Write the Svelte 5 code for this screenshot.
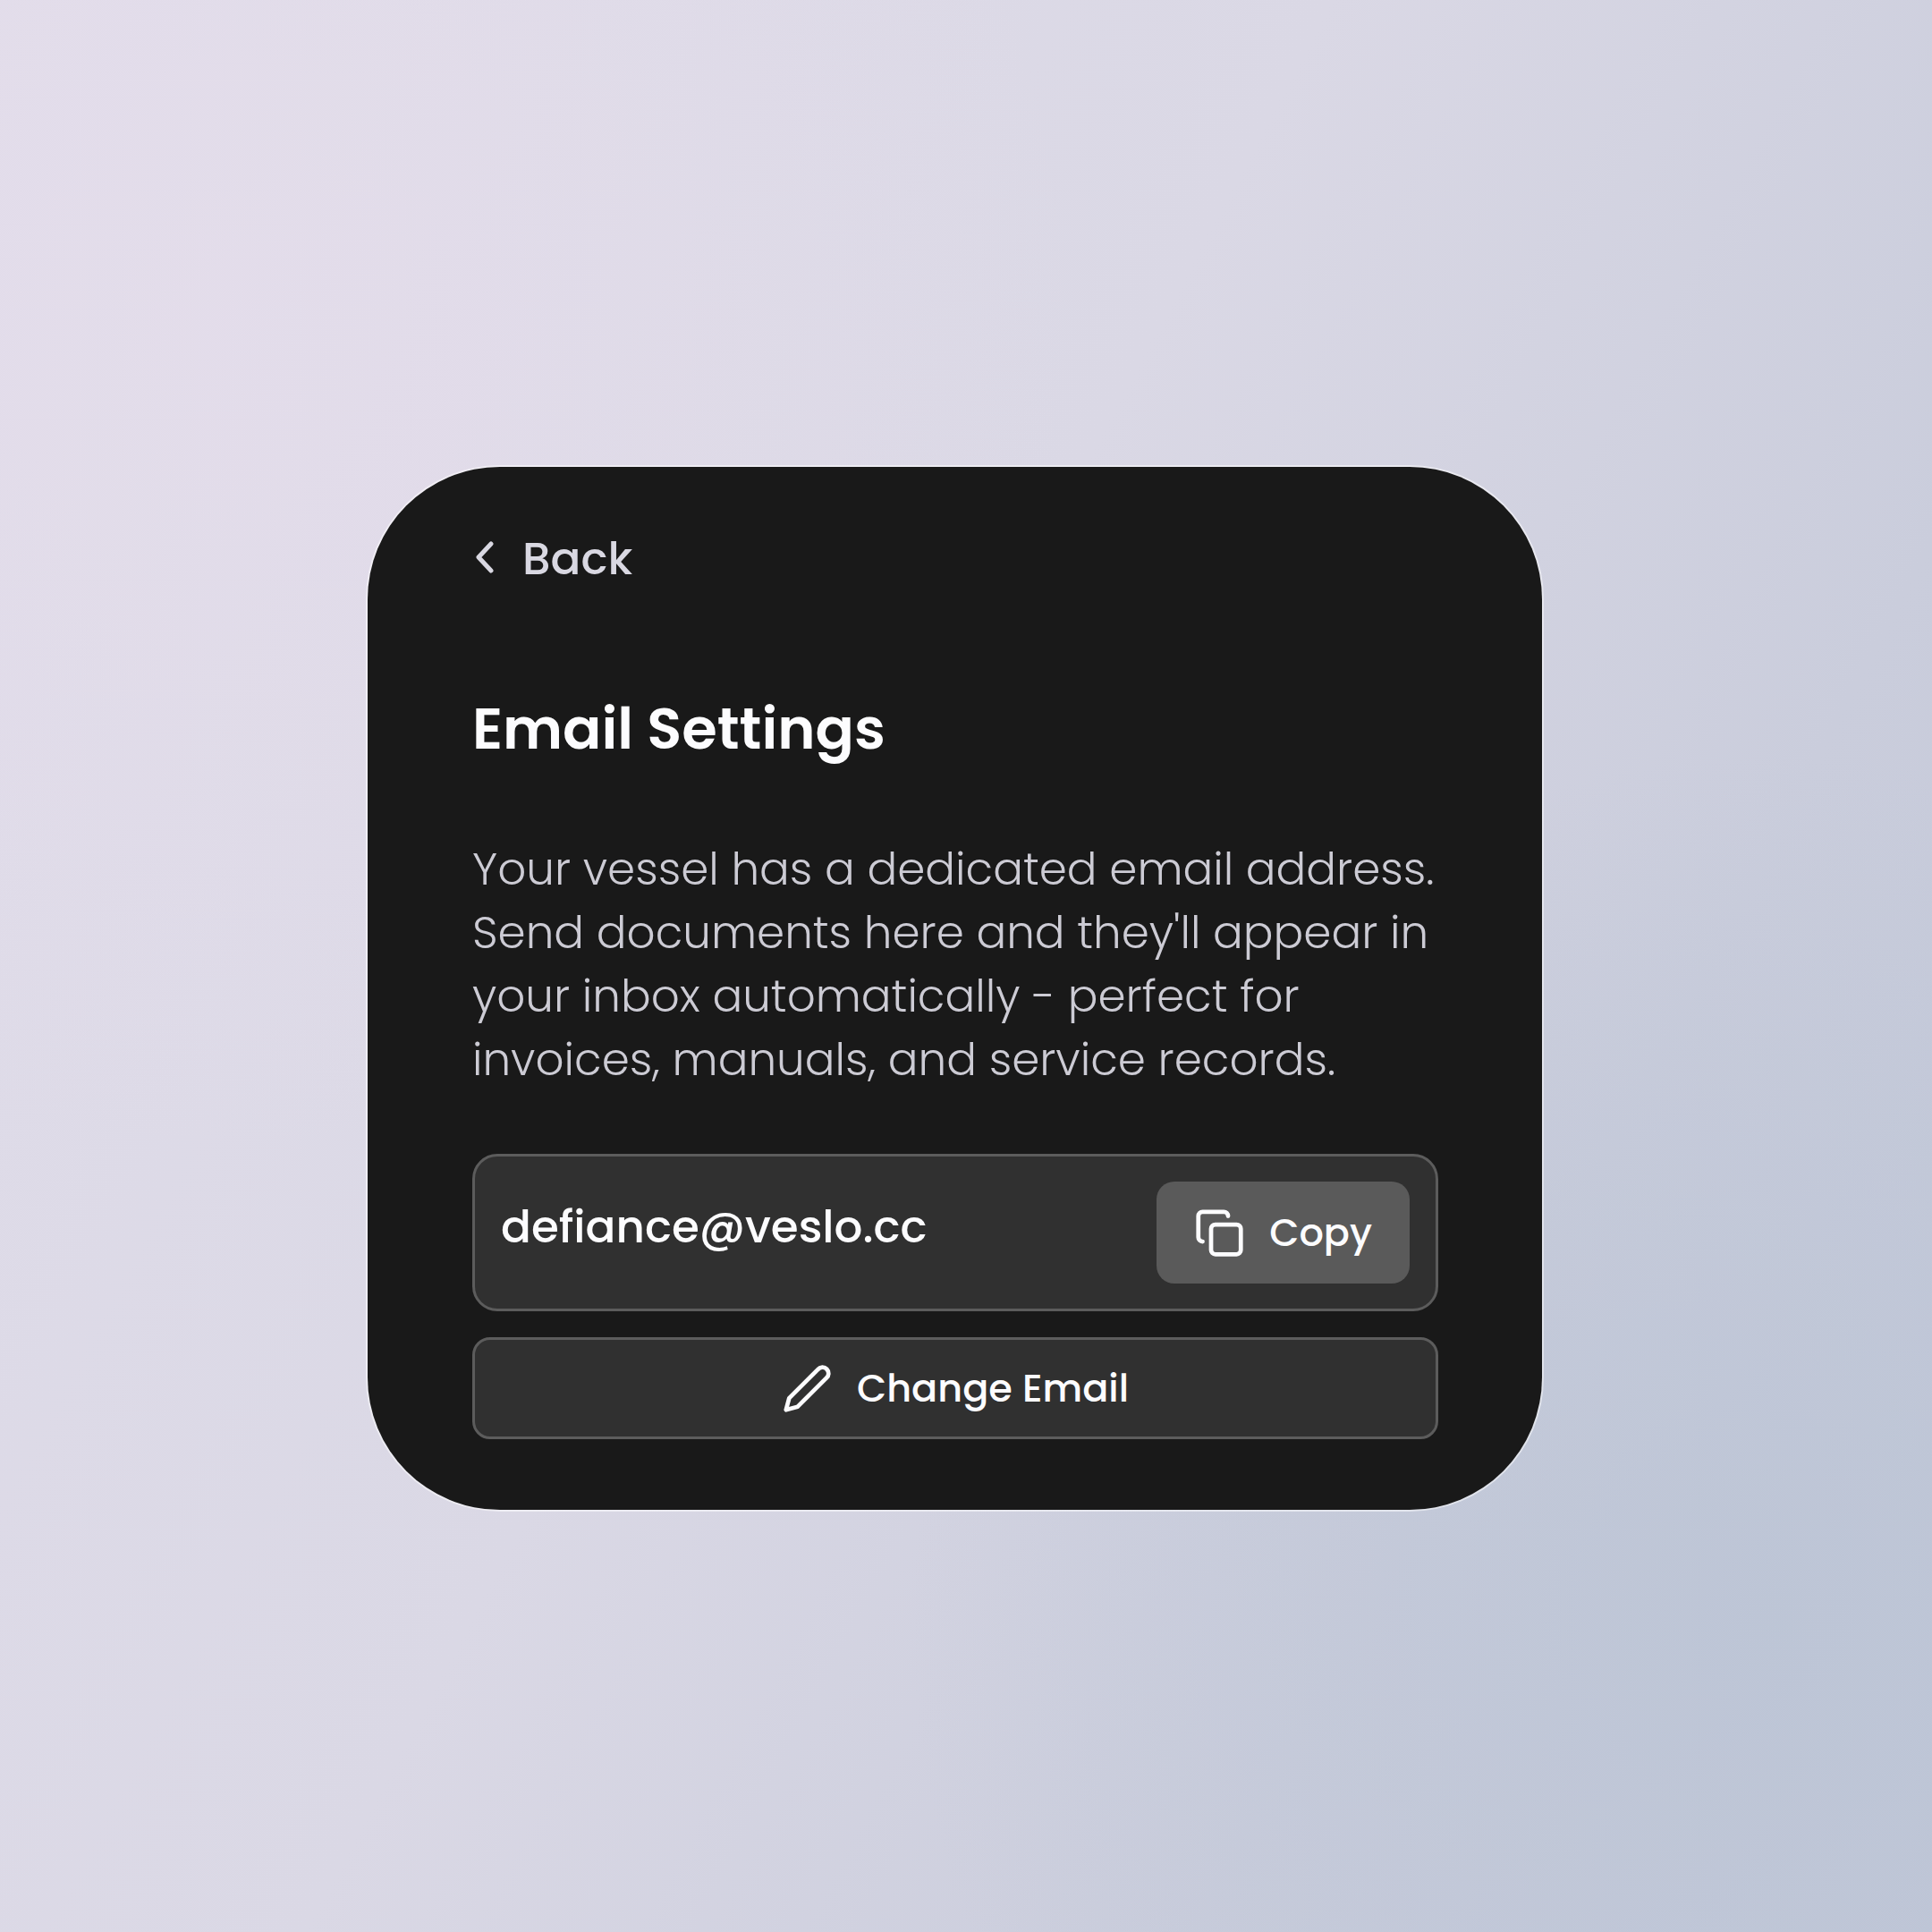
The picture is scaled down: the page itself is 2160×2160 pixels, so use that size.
<script>
  let email = $state('defiance@veslo.cc');
  let copied = $state(false);

  function handleCopy() {
    navigator.clipboard.writeText(email).then(() => {
      copied = true;
      setTimeout(() => {
        copied = false;
      }, 3000);
    });
  }
</script>

<main class="page">
  <section class="card" aria-labelledby="settings-title">
    <button class="back" type="button">
      <svg class="back-icon" viewBox="0 0 20 36" fill="none" aria-hidden="true">
        <path d="M17 3 3 18l14 15" />
      </svg>
      Back
    </button>

    <h1 class="title" id="settings-title">Email Settings</h1>

    <p class="description">
      Your vessel has a dedicated email address. Send documents here and they'll appear in your
      inbox automatically - perfect for invoices, manuals, and service records.
    </p>

    <div class="actions">
      <div class="address">
        <span class="address-text">{email}</span>
        <button class="button button--copy" type="button" onclick={handleCopy}>
          <svg class="icon" viewBox="0 0 24 24" aria-hidden="true">
            <rect width="14" height="14" x="8" y="8" rx="2" />
            <path d="M4 16c-1.1 0-2-.9-2-2V4c0-1.1.9-2 2-2h10c1.1 0 2 .9 2 2" />
          </svg>
          {copied ? 'Copied!' : 'Copy'}
        </button>
      </div>

      <button class="button button--change" type="button">
        <svg class="icon" viewBox="0 0 24 24" aria-hidden="true">
          <path d="M17 3a2.85 2.83 0 1 1 4 4L7.5 20.5 2 22l1.5-5.5Z" />
        </svg>
        Change Email
      </button>
    </div>
  </section>
</main>

<style>
  :global(body) {
    margin: 0;
  }

  .page {
    box-sizing: border-box;
    min-height: 100vh;
    display: flex;
    align-items: center;
    justify-content: center;
    padding: 50px 25px 0 0;
    background:
      radial-gradient(circle at 12% 16%, rgba(229, 221, 235, 0.7), transparent 36%),
      radial-gradient(circle at 92% 84%, rgba(187, 196, 213, 0.8), transparent 36%),
      linear-gradient(118deg, #e1ddea 0%, #dad8e5 45%, #cacddc 75%, #c1c7d8 100%);
    font-family: Poppins, Inter, 'Noto Sans', sans-serif;
  }

  .card {
    box-sizing: border-box;
    width: 100%;
    max-width: 1313px;
    display: flex;
    flex-direction: column;
    align-items: flex-start;
    padding: 67px 116px 79px 117px;
    border-radius: 148px;
    background: #191919;
    box-shadow: 0 0 0 2px rgba(255, 255, 255, 0.5);
  }

  button {
    border: 0;
    font: inherit;
    cursor: pointer;
  }

  .back {
    display: flex;
    align-items: center;
    gap: 32px;
    padding: 0 4px;
    background: none;
    color: #d9d8e2;
    font-size: 50px;
    font-weight: 500;
    line-height: 72px;
  }

  .back-icon {
    width: 20px;
    height: 36px;
    margin-bottom: 4px;
    stroke: currentColor;
    stroke-width: 5;
    stroke-linecap: round;
    stroke-linejoin: round;
  }

  .title {
    margin: 106px 0 0;
    color: #fcfcfe;
    font-size: 64px;
    font-weight: 600;
    line-height: 96px;
  }

  .description {
    margin: 73px 0 0;
    color: #cccbd4;
    font-size: 50px;
    font-weight: 300;
    line-height: 71px;
  }

  .actions {
    align-self: stretch;
    display: flex;
    flex-direction: column;
    gap: 29px;
    margin-top: 70px;
  }

  .address {
    display: flex;
    align-items: center;
    justify-content: space-between;
    padding: 28px 29px;
    border: 3px solid #5c5c5c;
    border-radius: 28px;
    background: #303030;
  }

  .address-text {
    padding-bottom: 12px;
    color: #fcfcfe;
    font-size: 50px;
    font-weight: 500;
    line-height: 72px;
  }

  .button {
    display: flex;
    align-items: center;
    justify-content: center;
    gap: 27px;
    border-radius: 20px;
    color: #fcfcfe;
    font-size: 43px;
    font-weight: 500;
    line-height: 64px;
  }

  .button--copy {
    padding: 25px 42px;
    background: #5a5a5a;
  }

  .button--change {
    padding: 22px 40px;
    border: 3px solid #5c5c5c;
    background: #303030;
  }

  .icon {
    width: 57px;
    height: 57px;
    fill: none;
    stroke: currentColor;
    stroke-width: 2;
    stroke-linecap: round;
    stroke-linejoin: round;
  }
</style>
